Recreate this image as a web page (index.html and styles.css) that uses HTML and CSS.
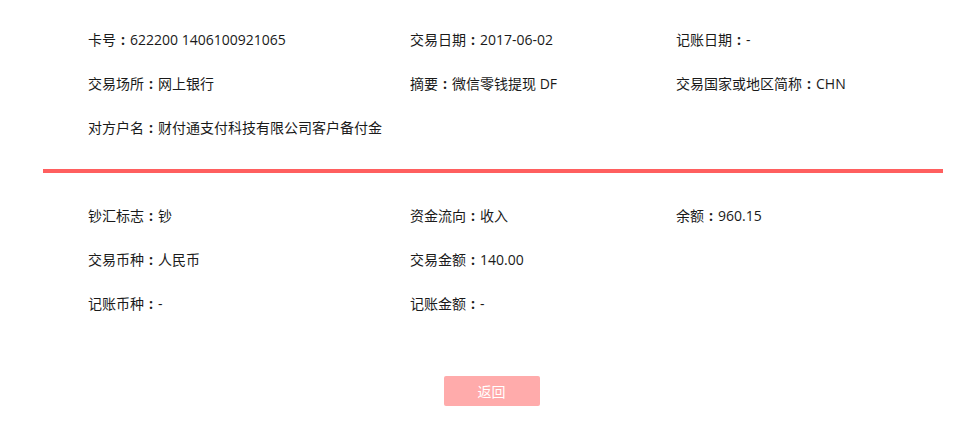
FILE: index.html
```html
<!DOCTYPE html>
<html lang="zh-CN">
<head>
    <meta charset="UTF-8">
    <title>交易明细</title>
    <link rel="stylesheet" href="styles.css">
</head>
<body>

<div class="detail">
    <div class="section top">
        <div class="item">卡号<span class="colon">:</span>622200 1406100921065</div>
        <div class="item">交易日期<span class="colon">:</span>2017-06-02</div>
        <div class="item">记账日期<span class="colon">:</span>-</div>
        <div class="item">交易场所<span class="colon">:</span>网上银行</div>
        <div class="item">摘要<span class="colon">:</span>微信零钱提现 DF</div>
        <div class="item">交易国家或地区简称<span class="colon">:</span>CHN</div>
        <div class="item wide">对方户名<span class="colon">:</span>财付通支付科技有限公司客户备付金</div>
    </div>

    <div class="divider"></div>

    <div class="section bottom">
        <div class="item">钞汇标志<span class="colon">:</span>钞</div>
        <div class="item">资金流向<span class="colon">:</span>收入</div>
        <div class="item">余额<span class="colon">:</span>960.15</div>
        <div class="item">交易币种<span class="colon">:</span>人民币</div>
        <div class="item">交易金额<span class="colon">:</span>140.00</div>
        <div class="item"></div>
        <div class="item">记账币种<span class="colon">:</span>-</div>
        <div class="item">记账金额<span class="colon">:</span>-</div>
        <div class="item"></div>
    </div>

    <div class="actions">
        <button class="back-btn">返回</button>
    </div>
</div>

</body>
</html>
```

FILE: styles.css
```css
body {
    margin: 0;
    font-family: "Open Sans", "Noto Sans CJK SC", sans-serif;
    font-size: 14px;
    color: #1a1a1a;
    background: #fff;
}
.detail {
    width: 900px;
    margin-left: 43px;
}
.section {
    display: grid;
    grid-template-columns: 322px 266px 1fr;
    padding-left: 45px;
}
.section.top {
    padding-top: 18px;
    padding-bottom: 19px;
}
.section.bottom {
    padding-top: 21px;
}
.item {
    height: 44px;
    line-height: 44px;
    white-space: nowrap;
}
.item.wide {
    grid-column: 1 / 4;
}
/* full-width colon, centered in its box */
.colon {
    display: inline-block;
    width: 14px;
    text-align: center;
    font-weight: bold;
}
.divider {
    height: 4px;
    background: #ff5f5f;
}
.actions {
    display: flex;
    justify-content: center;
    padding-top: 50px;
    padding-right: 3px;
}
.back-btn {
    width: 96px;
    height: 30px;
    border: none;
    border-radius: 2px;
    background: #ffabab;
    color: #fff;
    font-family: "Noto Sans CJK SC", sans-serif;
    font-size: 14px;
    cursor: pointer;
}
```
